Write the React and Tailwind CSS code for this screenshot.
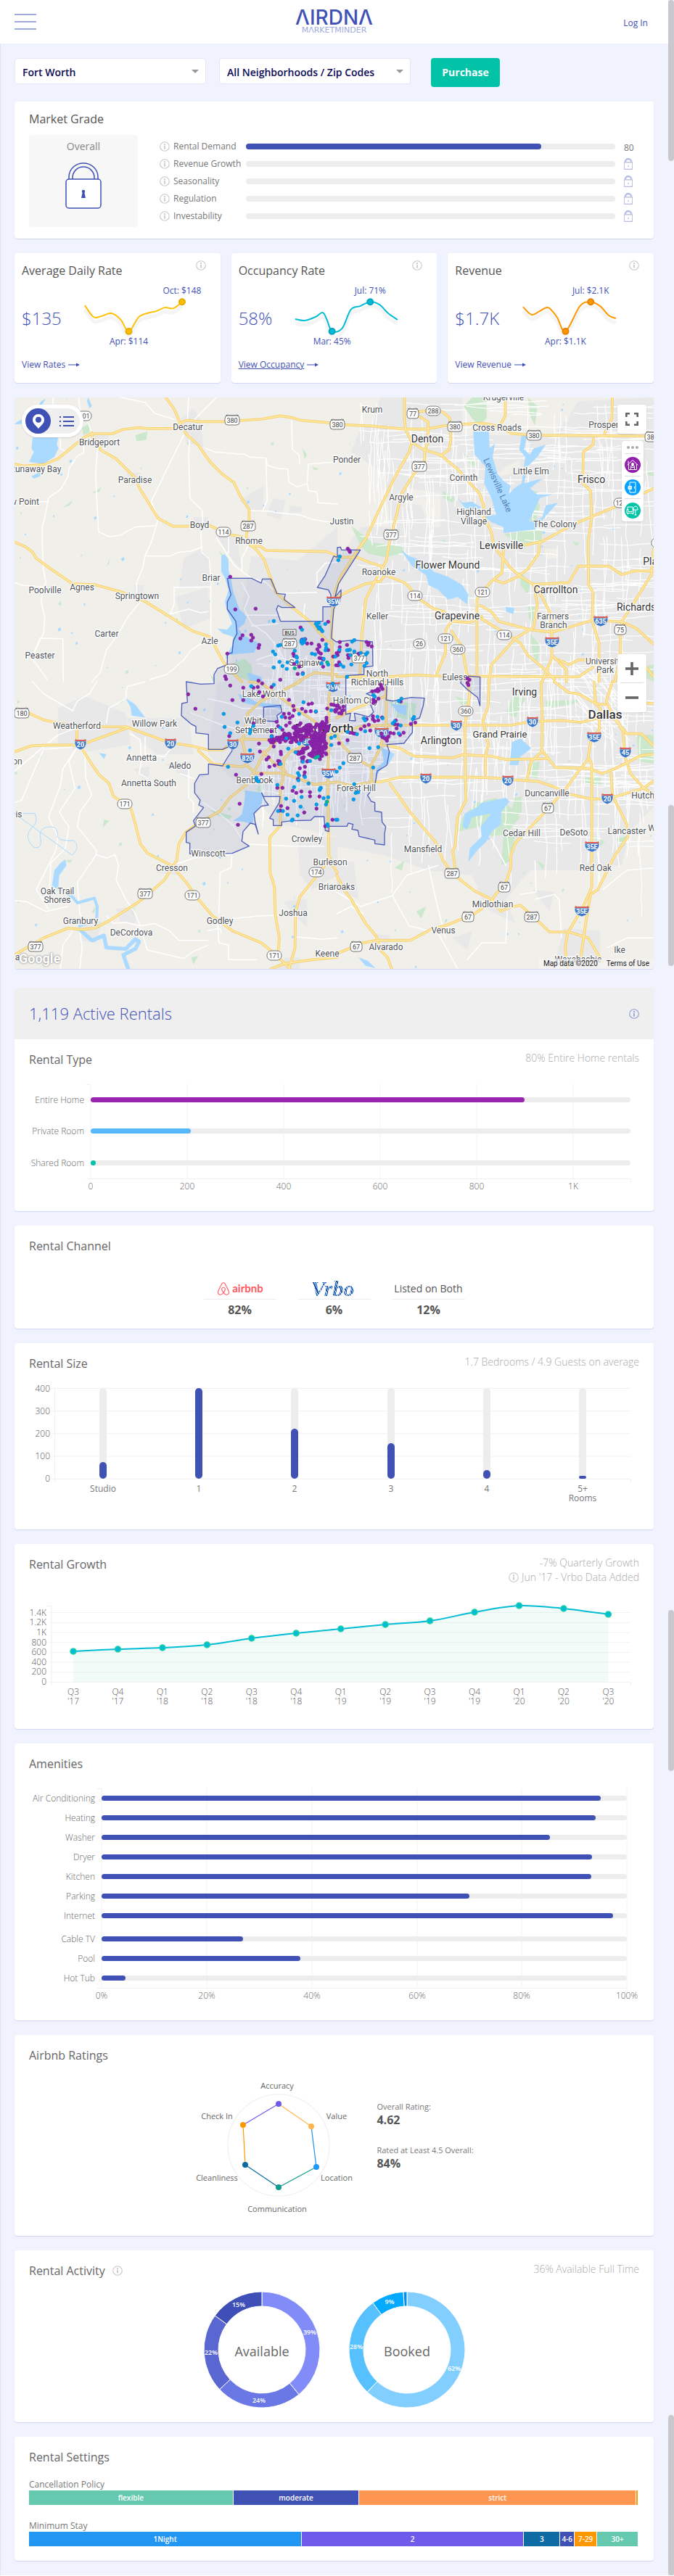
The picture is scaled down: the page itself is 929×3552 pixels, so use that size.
import React from "react";
import { FaAirbnb } from "react-icons/fa";

/* ---------- shared pieces ---------- */

function Info({ className = "text-[#c8c8c8]" }) {
  return (
    <svg className={"h-3.5 w-3.5 shrink-0 " + className} viewBox="0 0 14 14" fill="none" stroke="currentColor" aria-hidden="true">
      <circle cx="7" cy="7" r="6.3" strokeWidth="1.1" />
      <rect x="6.4" y="3.6" width="1.2" height="1.2" strokeWidth=".8" />
      <path d="M7 6.2v4.4" strokeWidth="1.8" />
    </svg>
  );
}

function Card({ children, className = "" }) {
  return <section className={"rounded bg-white shadow-[0_1px_1px_#cfd6f3] " + className}>{children}</section>;
}

function CardHead({ title, icon, children }) {
  return (
    <div className="flex items-start justify-between px-5 pt-4">
      <h2 className="flex items-center gap-2.5 text-base text-[#666]">
        {title}
        {icon}
      </h2>
      <div className="text-right text-sm font-light leading-5 text-[#aaa]">{children}</div>
    </div>
  );
}

function Lock({ className, stroke = 1.5 }) {
  return (
    <svg className={className} viewBox="0 0 50 64" fill="none" stroke="currentColor" strokeWidth={stroke} aria-hidden="true">
      <path d="M5 23v-3a20 19 0 0 1 40 0v3M10 23v-2a15 15 0 0 1 30 0v2" />
      <rect x="1" y="23" width="48" height="40" rx="4" fill="white" />
      <circle cx="25" cy="40" r="2.2" fill="currentColor" stroke="none" />
      <path d="M24 40h2l2 9h-6z" fill="currentColor" stroke="none" />
    </svg>
  );
}

function smooth(pts) {
  let d = `M${pts[0][0]} ${pts[0][1]}`;
  for (let i = 0; i < pts.length - 1; i++) {
    const p0 = pts[i - 1] || pts[i];
    const p1 = pts[i];
    const p2 = pts[i + 1];
    const p3 = pts[i + 2] || p2;
    d += `C${p1[0] + (p2[0] - p0[0]) / 6} ${p1[1] + (p2[1] - p0[1]) / 6} ${p2[0] - (p3[0] - p1[0]) / 6} ${p2[1] - (p3[1] - p1[1]) / 6} ${p2[0]} ${p2[1]}`;
  }
  return d;
}

/* ---------- header ---------- */

function Header() {
  return (
    <header className="flex h-15 items-center justify-between bg-white px-5">
      <button aria-label="Menu" className="flex w-[72px] flex-col gap-2">
        <span className="h-0.5 w-[30px] bg-[#a0abdc]" />
        <span className="h-0.5 w-[30px] bg-[#a0abdc]" />
        <span className="h-0.5 w-[30px] bg-[#a0abdc]" />
      </button>
      <a href="#home" aria-label="AIRDNA MARKETMINDER" className="flex flex-col items-center">
        <span className="font-[Inter,sans-serif] text-[28px] font-medium leading-6 text-[#3f51b5]">ΛIRDNΛ</span>
        <span className="font-['DejaVu_Sans',sans-serif] text-[11px] leading-3 text-[#a0abdc]">MΛRKETMINDER</span>
      </a>
      <div className="w-[72px] pr-2 text-right">
        <a href="#login" className="text-xs text-[#3f51b5]">Log In</a>
      </div>
    </header>
  );
}

function Picker({ label, value }) {
  return (
    <div className="relative w-[264px]">
      <select aria-label={label} className="h-9 w-full appearance-none rounded-sm border border-[#e3e6f3] bg-white pl-2.5 pr-6 pt-1 text-sm font-semibold text-[#0b0b56]">
        <option>{value}</option>
      </select>
      <span className="pointer-events-none absolute right-2.5 top-4 border-x-5 border-t-5 border-x-transparent border-t-[#999]" />
    </div>
  );
}

/* ---------- market grade ---------- */

const grades = ["Rental Demand", "Revenue Growth", "Seasonality", "Regulation", "Investability"];

function MarketGrade() {
  return (
    <Card className="mt-5 px-5 pb-4 pt-3">
      <h2 className="text-base text-[#555]">Market Grade</h2>
      <div className="mt-2.5 flex gap-[30px]">
        <div className="flex h-[127px] w-[150px] shrink-0 flex-col items-center rounded bg-[#f7f7f7] pt-1.5">
          <span className="text-sm text-[#888]">Overall</span>
          <Lock className="mt-3 h-16 w-[50px] text-[#3f51b5]" />
        </div>
        <div className="flex flex-1 flex-col pt-1">
          {grades.map((g, i) => (
            <div key={g} className="flex h-6 items-center">
              <Info />
              <span className="w-[105px] pl-[5px] text-xs text-[#777]">{g}</span>
              <div className="h-2 flex-1 rounded-full bg-[#ededed]">
                {i === 0 && <div className="h-2 w-4/5 rounded-full bg-[#3f51b5]" />}
              </div>
              <div className="w-[33px] pl-3">
                {i === 0 ? <span className="text-xs text-[#777]">80</span> : <Lock stroke={5} className="h-4 w-3 text-[#b2bae1]" />}
              </div>
            </div>
          ))}
        </div>
      </div>
    </Card>
  );
}

/* ---------- metric cards ---------- */

const metrics = [
  {
    title: "Average Daily Rate", value: "$135", link: "View Rates", color: "#ffc107", edge: "#e6aa00",
    pts: [[12, 32], [24, 48], [35, 47], [49, 43], [62, 52], [73, 68], [87, 48], [102, 42], [111, 40], [123, 35], [135, 36], [147, 27]],
    hi: [147, 27, "Oct: $148"], lo: [73, 68, "Apr: $114"],
  },
  {
    title: "Occupancy Rate", value: "58%", link: "View Occupancy", underline: true, color: "#00bcd4", edge: "#00a5bb",
    pts: [[3, 51], [16, 53], [31, 48], [41, 42], [47, 52], [54, 68], [68, 64], [80, 38], [93, 33], [107, 27], [120, 31], [132, 43], [145, 52]],
    hi: [107, 27, "Jul: 71%"], lo: [54, 68, "Mar: 45%"],
  },
  {
    title: "Revenue", value: "$1.7K", link: "View Revenue", color: "#ff9800", edge: "#e68200",
    pts: [[19, 34], [31, 45], [42, 40], [54, 35], [66, 48], [78, 68], [98, 33], [113, 27], [126, 33], [138, 46], [148, 50]],
    hi: [113, 27, "Jul: $2.1K"], lo: [78, 68, "Apr: $1.1K"],
  },
];

function Metric({ m }) {
  return (
    <Card className="px-2.5 pb-[15px] pt-2.5">
      <div className="flex justify-between pr-2.5">
        <h2 className="pt-0.5 text-base text-[#555]">{m.title}</h2>
        <Info />
      </div>
      <div className="mt-1 flex items-center">
        <span className="w-[75px] shrink-0 text-2xl font-light text-[#3f51b5]">{m.value}</span>
        <svg viewBox="0 0 190 100" className="h-[100px] w-full min-w-0 overflow-visible" preserveAspectRatio="xMinYMid meet">
          <path d={smooth(m.pts)} fill="none" stroke="#000" strokeOpacity=".04" strokeWidth="5" transform="translate(0 6)" />
          <path d={smooth(m.pts)} fill="none" stroke={m.color} strokeWidth="2" />
          {[m.hi, m.lo].map(([x, y, t], i) => (
            <g key={t}>
              <circle cx={x} cy={y} r="4" fill={m.color} stroke={m.edge} strokeWidth="2" />
              <text x={x} y={i ? 86 : 16} textAnchor="middle" fontSize="12" fill="#3f51b5">{t}</text>
            </g>
          ))}
        </svg>
      </div>
      <a href="#details" className="mt-1 flex items-center gap-1 text-xs leading-5 text-[#3f51b5]">
        <span className={m.underline ? "underline" : ""}>{m.link}</span>
        <svg viewBox="0 0 16 8" className="h-2 w-4"><path d="M0 3.5h11V1.400L16 4l-5 2.600V4.500H0z" fill="#3f51b5" /></svg>
      </a>
    </Card>
  );
}

/* ---------- map ---------- */

/* Each quadrant is drawn in thirds of a pixel with its own origin. */
const Q = { nw: [-60, -24], ne: [1332, -24], sw: [-60, 1176], se: [1332, 1176] };

const highways = {
  nw: [
    "60,300 100,308 180,302 240,278 300,228 350,188 380,174 465,174 510,156 575,149 610,153 720,152 750,128 775,118 820,124 920,124 1080,114 1160,100 1210,108 1240,118 1395,132",
    "685,24 720,72 745,130 770,175 820,222 870,292 920,342 967,376 990,425 1030,488 1030,530 1018,600 1045,640 1065,660 1092,695 1110,745 1140,830 1200,885 1280,950 1350,1030 1375,1045",
    "380,170 382,190 412,215 414,240 480,278 555,352 580,405 655,525 715,557 800,557 870,555 940,590 1000,600",
    "1035,637 1075,640 1100,657 1350,662 1395,680",
    "60,622 105,642 133,662 150,690 220,740 300,795 390,798 500,828 600,868 700,930 795,990 870,1015 900,1075 925,1120 960,1160 1000,1200",
    "1402,780 1385,830 1370,960 1375,1200",
    "1230,1200 1300,1163 1392,1170",
  ],
  ne: [
    "0,135 140,142 280,155 370,155 440,142 540,134 600,130 680,145 720,172 800,180 1000,182 1311,184",
    "0,685 85,685 140,708 185,722 205,760 280,790 300,808 330,850 400,898 445,910 475,950",
    "280,24 280,110 285,155 310,210 300,250 240,355 180,480 120,610 90,650 20,760 10,780",
    "310,210 360,240 430,262 500,320 545,372 590,420 608,470 610,520 640,580 650,640 720,730 760,765 810,795 850,850 880,910 890,1000 890,1100 850,1200",
    "320,90 378,125 378,210 365,240 363,290 320,340 270,420 250,500 215,640 205,700 155,790 120,860 105,1000 95,1200",
    "330,85 400,74 440,85 468,110 472,200 465,240 430,265",
    "0,850 60,820 120,795 180,785 200,760",
    "1062,195 1060,220 1020,250 1018,380 1050,410 1055,520 1040,620 1042,800 1060,830 1057,950 1085,1040 1085,1200",
    "1311,400 1270,420 1180,465 1060,515 1000,540 940,570 850,620 775,635",
    "840,620 835,670 790,735 740,770 690,792 650,778",
    "690,650 683,750 640,785 600,830 580,860 580,1165",
    "815,797 960,790 1000,722 1125,722 1180,757 1230,742 1311,742",
    "595,885 640,910 670,950 800,985 890,995 960,975 1060,945 1180,952 1240,980 1311,1045",
    "600,940 640,965 700,1000 760,1040 790,1090 850,1140 900,1190",
    "600,930 550,955 475,950 452,985 450,1080 415,1165",
    "475,990 520,1060 535,1150 545,1200",
    "1311,650 1300,760 1250,840 1180,950 1173,1010 1173,1100 1150,1200",
    "815,797 830,880 815,975 740,1020 640,1130 630,1200",
    "0,1180 240,1178 330,1172 400,1176 1000,1180 1060,1140",
    "890,1090 950,1150 950,1200",
    "920,1110 960,1130 1000,1110 1080,1108",
    "1140,24 1138,110 1105,180",
    "698,24 697,100 675,140",
    "1280,1140 1311,1180",
  ],
  sw: [
    "60,290 130,265 200,262 310,262 360,252 530,190 600,215 700,252 790,265 860,282 920,282 960,255 1005,237 1120,240 1250,232 1395,215",
    "120,130 180,158 260,175 420,186 530,187", "318,190 318,262",
    "820,285 880,340 1000,352 1020,345 1055,378 1170,378 1230,400 1300,425 1395,415",
    "1000,237 1010,280 1020,345", "1005,237 1025,130 1080,80 1150,45 1240,0",
    "335,270 375,335 410,385 450,420 470,475 540,520 560,590 580,670 610,710 710,760 770,830 820,900 880,970 960,1030 1080,1080 1130,1120 1200,1188",
    "60,1130 180,1060 280,1020 340,1025 390,1020 450,990 560,920 600,890 680,820 730,740 740,670 770,620 830,580 910,535 950,480 1020,425 1050,375 1090,300 1160,230",
    "1160,595 1160,440 1170,400 1175,320 1200,290 1290,250", "1160,595 1115,645 1117,790 1135,850 1138,960 1155,1060 1150,1120",
    "1365,730 1320,790 1240,890 1222,950 1220,1100 1195,1188", "1120,1188 1180,1165 1290,1150 1395,1140",
    "1030,0 1080,5 1220,110 1310,170", "1090,290 1130,335 1180,370", "1375,0 1360,60 1360,240 1355,400 1360,720 1365,745 1395,790",
  ],
  se: [
    "0,215 100,185 200,180 350,180 720,180 800,165 930,160 1010,168 1085,150",
    "545,0 550,60 530,180 532,400 535,490 500,560 490,680 480,700 490,770",
    "0,220 20,260 70,310 140,352", "178,265 200,262 260,275 320,308 480,315 520,302 640,308 700,322 870,318",
    "205,0 205,180 178,280 145,340 145,415", "0,415 60,430 145,415 180,415 260,395 400,395 550,395 650,398 720,405 830,412 900,435 950,462 1050,485 1120,485 1270,440 1311,410",
    "220,420 300,535 410,665 440,740 480,795 570,865 640,900 680,950 710,935 760,925 800,960 880,1035 960,1035 1040,1060 1100,1160",
    "1040,320 1000,370 950,440 870,530 740,665 720,720 720,770 700,830 650,890 640,910 570,960 460,1005 390,1025 305,1070 165,1070 110,1080 0,1125",
    "630,0 627,100 605,160 627,260 615,310 615,385", "845,0 850,150 848,290 805,330 785,410",
    "850,285 905,355 1040,358 1100,380 1150,360 1260,305 1311,300",
    "1090,190 1050,250 1040,310 1055,340 1055,850 1020,930 955,1040 945,1100 955,1188",
    "1135,380 1140,470 1200,590 1205,640 1150,720 1080,860 1050,880 1025,1030 1010,1140",
    "1155,150 1185,210 1190,300 1215,380 1270,440 1311,465", "1150,155 1200,215 1260,215 1311,265",
    "1065,0 1070,90 1090,110 1085,190", "1140,0 1115,80 1150,155", "900,0 960,45 1000,50 1070,90 1110,95",
    "0,150 80,110 200,60", "1200,85 1311,90", "0,800 30,860 60,900 120,1000 165,1055 180,1110 210,1140 228,1188",
  ],
};

const roads = {
  nw: [
    "500,24 600,45 640,90 720,115", "895,24 800,120", "780,24 775,118", "220,24 218,80", "250,190 250,235 275,250", "325,24 330,70 365,130 380,170",
    "350,190 345,255 320,265 285,320 280,355 250,405 200,440 190,500 175,560 175,640 180,740 190,790 175,820 170,870 185,930 180,1000 130,1100 195,1190",
    "60,455 200,455", "405,220 395,340 400,440 408,580 450,600 495,595 560,560 640,555",
    "760,180 715,270 625,455 655,520 645,560 625,625 600,680 590,730 565,790 565,830 580,870 530,930 490,1000 440,1070 415,1160 380,1200",
    "785,180 780,260 785,440 835,490 840,545 830,590 835,665 865,690 872,780 872,1010", "850,235 890,250 1015,260 1030,270 1100,275 1105,305 1150,318 1190,320 1195,375 1230,395 1270,380 1275,300 1395,290",
    "1100,280 1105,450 1085,495", "1030,492 1120,495 1140,500 1240,510 1290,528 1330,535 1395,545", "1270,380 1275,410 1310,415 1315,460 1395,465", "1205,120 1210,240 1235,260 1240,300",
    "600,680 705,680 735,665 790,660 830,645", "60,790 90,800 180,808", "165,1020 260,1022 262,1200", "165,1020 130,1110", "720,810 870,808", "720,810 720,880 705,920 780,900 830,915 860,910", "870,1015 790,1070 760,1110 690,1170 620,1190",
    "1025,640 1000,690 1000,740", "895,605 970,720 1040,772 1100,790 1140,830", "945,600 945,670", "1000,790 1030,850 1010,900 1040,960 1100,1000 1150,1060 1180,1120", "1040,970 1150,960", "1150,835 1310,830", "1260,880 1255,940", "1395,705 1345,710 1310,750 1312,800", "1060,1110 1120,1090 1190,1110 1260,1150", "980,925 1160,925",
  ],
  sw: [
    "135,0 180,50 300,120", "300,120 320,80 370,50 400,0", "440,170 450,110 520,70 525,20 600,0", "320,190 240,220 60,370", "320,270 260,360 250,430 200,560 240,640 230,700 150,860 200,940", "300,270 180,280 140,370 90,490 60,500",
    "350,280 355,400 380,470 330,540 320,600 400,700 395,720 320,830 325,900 330,960 360,1000", "320,270 285,330 310,440 245,540 285,600 270,690 210,750 205,850 230,870", "395,715 440,730 475,715 490,760 480,820 520,900 560,960 580,1010 520,995 470,1000 440,970",
    "580,1010 640,1000 700,1030 740,1070 860,1070", "540,215 580,240 585,330 575,380 610,400", "600,230 600,300 680,310 720,260", "745,380 800,400", "780,340 780,480 800,500 800,540", "960,720 955,770 910,790 905,960", "960,980 1060,970 1150,965", "900,1000 905,1080 945,1090 945,1150 1060,1150",
    "860,1030 910,1020 915,1040", "580,1020 610,1110 760,1145 800,1115 860,1090", "1030,672 1200,680 1340,680", "715,760 800,730 960,715", "60,905 110,910 190,950 280,930", "300,1030 260,1090 250,1188", "330,1030 340,1100 330,1188",
    "1220,1055 1330,1065 1395,1060", "840,500 900,540 960,590 1000,650", "790,130 870,160 920,180 1000,200", "860,70 950,90 1000,110 1150,110",
  ],
  ne: [],
  se: ["0,870 100,930 230,885 300,1010 420,1040 500,1188", "230,885 290,800 420,760", "380,760 410,900 450,1060", "0,960 60,930 110,960", "540,1150 600,1080 700,1080 705,950", "820,900 900,880 920,900 930,1060", "1100,860 1200,780 1311,770", "1120,1100 1200,1060 1311,1060", "700,760 640,650", "820,740 825,870 760,880"],
};

const lakes = {
  nw: [
    "135,190 240,190 235,220 242,235 225,270 200,285 180,300 145,295 120,290 140,250 130,235",
    "915,680 930,672 945,700 945,740 955,770 965,830 990,900 1020,930 1010,960 985,980 1010,1010 1070,1040 1050,1080 975,1085 960,1090 940,1085 960,1050 965,1015 920,1000 900,980 940,985 960,960 940,910 930,870 945,820 930,770 915,745",
    "365,24 380,60 370,70 360,40", "130,350 170,330 165,350 140,360", "170,40 190,30 180,45 150,90 85,135 60,135 70,125 140,90", "1020,1160 1080,1180 1085,1200 1035,1200",
  ],
  ne: [
    "565,165 630,165 632,235 655,215 645,270 665,340 690,370 720,390 710,425 735,400 765,380 780,270 755,240 765,180 790,170 775,240 800,260 815,235 865,220 830,270 790,310 775,380 810,370 850,360 800,400 830,425 890,425 840,440 795,540 850,520 865,470 915,460 860,520 820,570 690,585 690,560 640,540 610,515 660,510 640,440 610,380 615,310 570,260",
    "265,655 300,680 330,690 380,720 400,745 460,765 520,800 545,840 540,880 500,850 460,860 420,820 380,800 370,760 310,720 290,690", "500,440 520,460 560,455 600,480 560,490 530,480", "700,890 735,895 730,920 700,910",
  ],
  sw: [
    "1015,450 1085,460 1085,500 1050,545 1045,590 1010,580 965,575 1000,550 1010,500", "985,50 1020,60 1060,85 1110,90 1165,95 1160,110 1090,105 1040,95 1000,85",
    "520,68 560,95 600,148 545,140 540,105", "270,735 275,760 245,800 240,860 215,845 225,780 250,750", "410,295 440,300 430,320",
  ],
  se: [
    "520,600 530,545 580,520 600,500 700,480 715,495 680,540 680,590 640,620 620,660 580,700 545,745 550,690 600,640 595,600 640,545 560,560 540,610",
    "725,250 760,235 805,275 760,310 750,345 715,345 720,300", "185,270 240,300 215,340 190,350 160,395 165,360 195,330", "225,90 290,100 285,140 250,125", "90,1140 130,1155 160,1185 120,1175",
  ],
};

const parks = {
  nw: ["560,180 610,165 605,200 565,205", "340,150 370,130 370,170 345,180", "1250,235 1270,260 1260,280", "260,480 300,450 290,470", "870,1170 890,1190 880,1200", "950,1130 1010,1105 1040,1130 1045,1200 980,1180", "1290,310 1320,320 1300,325", "380,420 420,395 410,415", "905,660 945,690 940,720", "440,720 455,690 450,715", "240,880 250,865 255,885", "985,910 1010,930 1005,960 990,940"],
  ne: ["525,60 560,24 620,24 620,110 590,140 560,110", "690,590 850,565 848,620 780,625 720,610", "60,555 150,625 270,640 280,670 200,685 130,670 100,640", "440,410 490,440 480,460 440,440", "760,740 800,800 790,840 760,800", "790,24 830,60 820,140 800,100", "760,420 830,410 820,440 790,440", "520,250 580,300 560,310", "975,620 1005,625 990,640", "790,885 820,890 810,960 795,940", "800,1000 840,1050 830,1130 810,1080", "790,460 820,440 840,470 820,560 795,540", "1290,330 1311,335 1311,350 1285,345", "1290,1130 1311,1130 1311,1200 1270,1180"],
  sw: ["430,570 450,575 425,605", "870,530 960,555 950,570 890,550", "1070,430 1100,420 1090,460 1060,450", "1240,130 1270,120 1280,160", "270,740 300,735 290,750", "790,1140 820,1135 800,1170", "1010,450 1035,460 1020,500", "380,950 395,930 390,960", "540,930 555,940 550,965"],
  se: ["580,500 660,480 720,520 760,560 700,630 640,640 590,600 500,620 520,560", "735,480 765,475 765,540 740,560 725,530", "1240,220 1311,220 1311,340 1250,330", "730,60 780,70 740,150 700,130", "790,340 840,330 830,400 790,390", "690,640 740,620 720,740 680,760", "860,80 1000,75 990,90 870,110", "1150,650 1200,640 1190,680", "220,80 330,90 320,160 240,150", "240,770 280,740 270,780", "830,740 860,760 850,780", "1010,400 1090,390 1100,430 1050,430", "1060,640 1110,660 1090,680", "330,950 370,930 350,980", "490,60 560,80 520,100"],
};

const urban = {
  nw: ["760,690 830,650 870,690 870,810 740,810", "990,450 1090,390 1090,500 1030,490", "725,850 860,810 870,940 760,980", "1130,440 1180,450 1160,530 1100,510", "750,110 800,70 830,120 840,230 770,210", "800,520 860,520 860,570 800,570", "1040,680 1230,700 1395,560 1395,1200 940,1200 1000,900", "385,180 450,180 440,230 390,230", "555,800 595,800 590,850 560,850", "1200,470 1250,480 1245,500 1195,500", "900,600 980,600 1000,740 950,680", "525,335 585,335 580,375 530,375"],
  ne: ["180,24 520,24 520,180 900,180 1000,40 1311,24 1311,1200 0,1200 0,700 100,560 220,560 200,340 60,250 100,140 150,140"],
  sw: ["900,0 1395,0 1395,640 1160,590 1000,440 860,300", "240,110 350,60 520,130 540,260 360,290 240,260", "520,150 780,150 800,300 650,300 560,230", "680,340 790,330 770,400", "640,790 740,750 740,800", "320,1010 420,990 400,1080 340,1070", "480,940 560,930 560,1000 500,1000", "1230,640 1395,640 1395,800 1290,860 1240,800", "1170,910 1270,900 1270,1020", "550,360 620,350 610,420", "1180,1140 1240,1140 1240,1188 1140,1188"],
  se: ["0,0 1311,0 1311,520 1210,620 1180,760 1000,780 800,780 700,900 740,1000 620,940 560,800 380,780 200,720 0,680", "0,760 70,740 90,900 0,860", "810,860 900,870 880,950", "480,1060 560,1030 540,1110", "940,1020 1090,1030 1090,1188 900,1170", "140,1040 220,1050 210,1100"],
};

const pale = {
  ne: ["640,360 760,330 760,280 700,310", "60,24 170,30 90,110 0,150 0,24", "290,400 430,420 430,560 380,560 350,470 280,460", "860,650 915,650 915,690 865,690", "890,24 980,24 960,120 880,140", "630,24 780,24 780,60 640,130"],
};

const city =
  "940,772 1040,772 1080,792 1085,775 1120,775 1145,835 1180,838 1175,860 1220,893 1165,893 1150,885 1143,900 1160,950 1335,950 1335,890 1368,890 1368,840 1358,820 1312,810 1345,760 1380,680 1395,685 1395,645 1408,643 1412,655 1490,655 1400,795 1385,850 1410,820 1410,850 1395,870 1380,900 1370,1020 1390,1035 1460,1028 1540,1035 1542,1135 1505,1140 1505,1170 1430,1175 1430,1335 1450,1330 1445,1360 1470,1362 1465,1330 1525,1345 1545,1325 1530,1290 1550,1265 1515,1250 1560,1230 1600,1210 1597,1275 1625,1280 1700,1265 1755,1268 1750,1300 1735,1350 1705,1360 1705,1410 1670,1455 1600,1460 1610,1490 1600,1545 1560,1570 1550,1630 1520,1670 1535,1695 1550,1700 1550,1735 1578,1740 1580,1780 1595,1800 1590,1830 1590,1875 1550,1870 1550,1855 1485,1840 1480,1815 1455,1810 1460,1790 1440,1785 1435,1798 1360,1798 1360,1820 1345,1815 1340,1758 1300,1758 1285,1773 1210,1775 1165,1780 1165,1795 1130,1795 1130,1770 1115,1765 1155,1700 1158,1675 1090,1675 1082,1660 1095,1690 1110,1710 1080,1715 1050,1745 1055,1780 1068,1830 1055,1790 1035,1785 1005,1820 1000,1860 1030,1880 960,1910 785,1912 785,1868 770,1865 770,1822 808,1797 800,1775 842,1720 822,1710 828,1690 805,1660 805,1620 825,1585 862,1582 862,1540 920,1548 940,1515 960,1485 955,1465 920,1480 862,1480 862,1418 810,1412 810,1385 790,1375 750,1340 752,1290 775,1285 770,1200 830,1210 885,1208 885,1170 900,1145 940,1130 940,1085 960,1080 965,1030 980,1000 975,950 940,900 940,870 955,840 945,800";

const places = {
  nw: [[410, 208, "Bridgeport"], [778, 145, "Decatur"], [148, 319, "Runaway Bay"], [558, 364, "Paradise"], [103, 456, "w Point"], [826, 550, "Boyd"], [1028, 616, "Rhome"], [874, 769, "Briar"], [185, 822, "Poolville"], [338, 810, "Agnes"], [567, 844, "Springtown"], [442, 1000, "Carter"], [868, 1030, "Azle"], [166, 1090, "Peaster"], [1262, 1120, "Saginaw"]],
  ne: [[148, 73, "Krum"], [690, 24, "Krugerville"], [662, 150, "Cross Roads"], [1103, 138, "Prosper"], [376, 196, "Denton", 14], [42, 280, "Ponder"], [803, 330, "Little Elm"], [1054, 364, "Frisco", 14], [525, 355, "Corinth"], [268, 438, "Argyle"], [566, 498, "Highland"], [568, 535, "Village"], [22, 535, "Justin"], [902, 547, "The Colony"], [682, 635, "Lewisville", 14], [174, 745, "Roanoke"], [458, 718, "Flower Mound", 14], [907, 820, "Carrollton", 14], [168, 928, "Keller"], [498, 928, "Grapevine", 14], [894, 928, "Farmers"], [896, 964, "Branch"], [1262, 890, "Richardson", 14], [1320, 703, "Plano", 14], [1108, 1114, "University"], [1110, 1150, "Park"], [168, 1167, "North"], [168, 1203, "Richland Hills"], [488, 1180, "Euless"]],
  sw: [[318, 181, "Weatherford"], [640, 172, "Willow Park"], [1092, 51, "Lake Worth"], [1057, 162, "White"], [1058, 199, "Settlement"], [1342, 192, "Fort Worth", 17], [584, 313, "Annetta"], [745, 346, "Aledo"], [616, 418, "Annetta South"], [1053, 406, "Benbrook"], [72, 328, "on"], [77, 547, "is"], [1269, 649, "Crowley"], [860, 709, "Winscott"], [710, 769, "Cresson"], [1364, 745, "Burleson"], [1391, 847, "Briaroaks"], [238, 865, "Oak Trail"], [238, 901, "Shores"], [1212, 955, "Joshua"], [333, 988, "Granbury"], [910, 988, "Godley"], [543, 1036, "DeCordova"], [1354, 1123, "Keene"], [72, 1140, "a"]],
  se: [[778, 42, "Irving", 14], [78, 76, "Haltom City"], [1110, 136, "Dallas", 17], [432, 244, "Arlington", 14], [674, 217, "Grand Prairie", 13], [869, 460, "Duncanville"], [80, 439, "Forest Hill"], [1290, 469, "Hutchins"], [764, 625, "Cedar Hill"], [982, 622, "DeSoto"], [1200, 616, "Lancaster"], [1345, 604, "Wilmer"], [358, 691, "Mansfield"], [1071, 769, "Red Oak"], [645, 919, "Midlothian"], [442, 1027, "Venus"], [205, 1096, "Alvarado"], [1169, 1108, "Ike"], [1000, 1147, "Waxahachie"]],
};

/* o = state oval, u = US shield, i = interstate */
const shields = {
  nw: [[348, 99, "101", "o"], [961, 116, "380", "u"], [1394, 134, "380", "u"], [925, 579, "114", "o"], [1027, 554, "287", "u"], [1380, 868, "35W", "i"], [1198, 1040, "287", "u"], [958, 1146, "199", "o"]],
  ne: [[316, 89, "77", "u"], [400, 78, "288", "o"], [490, 143, "380", "u"], [817, 179, "380", "u"], [1306, 187, "380", "u"], [343, 309, "377", "u"], [1176, 460, "121", "o"], [226, 590, "377", "u"], [1325, 625, "75", "o"], [325, 843, "114", "o"], [604, 828, "121", "o"], [1091, 949, "635", "i"], [1173, 983, "75", "u"], [694, 1005, "114", "o"], [451, 1020, "121", "o"], [891, 1036, "35E", "i"], [342, 1041, "26", "o"], [501, 1065, "360", "o"], [94, 1101, "377", "u"]],
  sw: [[91, 128, "180", "u"], [334, 259, "20", "i"], [706, 255, "20", "i"], [964, 259, "30", "i"], [1022, 315, "820", "i"], [1376, 22, "35W", "i"], [1268, 246, "30", "i"], [1360, 379, "35W", "i"], [517, 503, "171", "o"], [839, 583, "377", "u"], [1309, 786, "174", "o"], [601, 875, "377", "u"], [796, 881, "171", "o"], [148, 1094, "377", "u"], [1135, 1131, "171", "o"]],
  se: [[535, 120, "360", "o"], [496, 181, "30", "i"], [809, 166, "30", "i"], [186, 211, "820", "i"], [1064, 227, "35E", "i"], [1195, 290, "45", "i"], [74, 314, "287", "u"], [368, 400, "20", "i"], [709, 409, "20", "i"], [1120, 482, "20", "i"], [874, 521, "67", "u"], [1055, 680, "35E", "i"], [478, 791, "287", "u"], [694, 848, "67", "u"], [1013, 949, "35E", "i"], [544, 973, "67", "u"], [807, 971, "287", "u"], [82, 1096, "67", "u"]],
};

const homes = {
  nw: "952,766 973,901 1057,898 994,1021 1003,1008 1039,1006 1046,1018 1039,1030 1072,1048 1069,1060 940,1084 931,1178 935,1189 1069,1196 1159,1192 1243,976 1249,1026 1262,1024 1270,1042 1288,1042 1333,1027 1357,952 1318,1048 1312,1066 1318,1078 1327,1084 1213,1084 1216,1093 1321,1102 1330,1104 1216,1126 1237,1138 1231,1168 1252,1165 1336,1138 1378,1096 1390,1132 1357,1069 1321,1055 1337,1108",
  ne: "46,650 55,663 52,657 13,1036 43,1048 124,1036 130,1048 145,1054 13,1057 10,1075 4,1090 91,1084 47,1090 49,1102 10,1120 7,1132 541,1186 549,1192 0,1082 133,1040",
  sw: "778,52 952,16 808,112 961,76 1006,25 1006,76 1048,25 1066,22 1084,7 1087,61 1123,22 1072,43 1048,172 948,225 1071,256 1075,289 1111,313 1102,322 1114,352 1135,346 1150,328 1153,340 1156,330 976,385 1081,382 991,505 984,592 1147,439 1168,439 1162,514 1189,523 1159,533 1210,451 1225,460 1246,454 1282,457 1282,474 1321,475 1258,541 1309,525 1345,598 1375,571 1240,358 1260,375 1261,352 1232,402 1258,389 1195,75 1213,100 1216,118 1249,112 1264,123 1276,93 1290,90 1285,122 1306,124 1353,111 1370,94 1380,96 1387,124 1174,133 1180,148 1195,132 1210,142 1198,150 1144,166 1150,184 1183,181 1198,170 1122,205 1144,232 1168,199 1132,268 1161,290 1162,300 1120,250 1135,245 1250,330 1248,315 1270,330 1385,118 1391,100",
  se: "182,12 170,30 160,38 147,40 190,30 185,22 175,36 152,75 160,82 173,70 152,88 265,82 124,155 150,143 150,155 157,163 172,160 188,148 115,184 133,178 139,202 100,196 55,211 67,213 75,215 45,242 10,255 190,230 200,235 208,244 215,226 222,212 236,214 262,220 277,211 307,175 325,169 245,160 240,176 253,178 248,193 0,115 12,108 28,103 22,120 10,130 28,118 186,215 541,5 545,14 5,98 170,40 210,232 20,132",
};
const rooms = {
  nw: "1132,949 1249,985 1306,960 1318,956 1312,970 1322,975 1345,961 1333,991 1318,980 1328,984 1150,1051 1159,1048 1129,1075 1138,1087 1156,1118 1132,1141 1168,1135 1186,1147 1189,1120 1219,1072 1225,1096 1228,1118 1252,1168 1258,1024 1246,1036 1250,1042 1290,1084 1303,1087 1348,1046 1346,1070 1330,1124 1357,1129 1387,1096 1349,1060 1338,1105 1246,1030 1228,1100 1258,1036",
  ne: "13,682 7,697 64,1034 73,1028 49,1069 73,1075 43,1070 57,1090 100,1081 121,1087 127,1080 61,1129 115,1135 124,1123 16,1129 28,1138 43,1180 12,1068 55,1068",
  sw: "1039,19 1132,13 925,133 982,169 929,187 952,213 1048,183 1036,199 1033,213 1034,284 943,352 1060,398 1062,408 1070,412 1147,427 1165,145 1159,190 1255,85 1237,133 1123,226 1184,234 1237,256 1192,277 1222,292 1160,340 1252,331 1282,328 1306,123 1370,232 1385,225 1370,262 1216,436 1276,421 1232,378 1237,388 1261,394 1234,408 1327,439 1322,448 1183,484 1216,493 1247,477 1243,517 1231,553 1189,550 1210,570 1207,574 1150,535 1170,535 1309,508 1338,482 1357,478 1348,508 1354,590 1355,596 1390,571 1370,118 1376,8 1324,442",
  se: "152,55 158,62 112,151 118,160 169,145 190,151 118,205 45,208 84,217 268,70 257,80 240,164 232,172 265,181 257,214 315,154 320,146 136,275 172,271 28,337 13,356 151,355 0,372 73,424 79,460 89,457 70,487 3,571",
};

function rng(seed) {
  let s = seed;
  return () => {
    s = (s * 16807) % 2147483647;
    return s / 2147483647;
  };
}

function cluster(seed, cx, cy, rx, ry, n) {
  const r = rng(seed);
  return Array.from({ length: n }, () => {
    const a = r() * Math.PI * 2;
    const k = Math.sqrt(r());
    return [Math.round(cx + Math.cos(a) * rx * k), Math.round(cy + Math.sin(a) * ry * k)];
  });
}

const downtown = [
  ...cluster(11, 1250, 200, 40, 32, 50), ...cluster(23, 1210, 230, 50, 22, 45), ...cluster(31, 1315, 255, 36, 45, 70), ...cluster(47, 1265, 300, 35, 30, 24),
  ...cluster(53, 1340, 185, 18, 45, 26), ...cluster(61, 1160, 238, 50, 22, 18), ...cluster(71, 1300, 195, 40, 25, 16), ...cluster(83, 1320, 300, 30, 24, 20),
];

function streets() {
  const r = rng(97);
  const out = [];
  const walk = (x, y, dx, dy, steps) => {
    let d = `M${x} ${y}`;
    for (let i = 0; i < steps; i++) {
      x += dx * (28 + r() * 26) + (r() - 0.5) * (dy ? 12 : 0);
      y += dy * (28 + r() * 26) + (r() - 0.5) * (dx ? 12 : 0);
      d += `L${Math.round(x)} ${Math.round(y)}`;
    }
    out.push(d);
  };
  for (let i = 0; i < 210; i++) walk(1420 + r() * 1200, 20 + r() * 1850, 1, 0, 3 + Math.floor(r() * 9));
  for (let i = 0; i < 230; i++) walk(1420 + r() * 1200, 20 + r() * 1800, 0, 1, 3 + Math.floor(r() * 8));
  for (let i = 0; i < 70; i++) walk(1000 + r() * 400, 1080 + r() * 560, 1, 0, 2 + Math.floor(r() * 5));
  for (let i = 0; i < 70; i++) walk(1000 + r() * 400, 1000 + r() * 560, 0, 1, 2 + Math.floor(r() * 5));
  for (let i = 0; i < 30; i++) walk(2300 + r() * 180, 1100 + r() * 260, 0.7, 0.8, 3);
  return out.join("");
}
const streetPath = streets();

const ponds = (() => {
  const r = rng(5);
  return Array.from({ length: 190 }, (_, i) => {
    const x = Math.round(r() * 2640);
    const y = Math.round(r() * 2360);
    const s = 3 + r() * 8;
    return { green: i % 3 === 0, d: `M${x} ${y}l${s} ${-s * 0.5}l${s * 0.3} ${s}l${-s} ${s * 0.6}z` };
  });
})();

function quad(name, render) {
  return (
    <g key={name} transform={`translate(${Q[name][0]} ${Q[name][1]})`}>
      {render}
    </g>
  );
}
const names = ["nw", "ne", "sw", "se"];
const polys = (set, props) => names.map((n) => quad(n, (set[n] || []).map((p, i) => <polygon key={i} points={p} {...props} />)));
const lines = (set, props) => names.map((n) => quad(n, set[n].map((p, i) => <polyline key={i} points={p} {...props} />)));
const dots = (set, props) =>
  names.map((n) =>
    quad(n, (set[n] || "").split(" ").filter(Boolean).map((p, i) => {
      const [x, y] = p.split(",");
      return <circle key={i} cx={x} cy={y} r="7" {...props} />;
    })),
  );

function Shield({ x, y, label, kind }) {
  const w = label.length > 2 ? 20 : 16;
  if (kind === "i")
    return (
      <g>
        <path d={`M${x - w / 2} ${y - 4}h${w}q1 9 ${-w / 2} 12q${-w / 2 - 1} -3 ${-w / 2} -12z`} fill="#3b78c9" stroke="#fff" strokeWidth=".6" />
        <path d={`M${x - w / 2 + 1} ${y - 7}l2 1h${w - 6}l2 -1l1 3h${-w}z`} fill="#d9605a" />
        <text x={x} y={y + 4} textAnchor="middle" fontSize="9" fontWeight="700" fill="#fff">{label}</text>
      </g>
    );
  return (
    <g>
      <rect x={x - w / 2} y={y - 6} width={w} height="13" rx={kind === "o" ? 6 : 4} fill="#fff" stroke="#777" strokeWidth="1" />
      {kind === "u" && <path d={`M${x - w / 2 + 1} ${y - 6}l3 -1l3 1h${w - 14}l3 -1l3 1`} fill="#fff" stroke="#777" strokeWidth="1" />}
      <text x={x} y={y + 4} textAnchor="middle" fontSize="9" fill="#444">{label}</text>
    </g>
  );
}

function MapArt() {
  return (
    <svg viewBox="0 0 881 788" preserveAspectRatio="xMidYMid slice" className="block h-full w-full font-[Roboto,sans-serif]">
      <rect width="881" height="788" fill="#f0efea" />
      <g transform="scale(.33333)" fill="none" strokeLinejoin="round" strokeLinecap="round">
        {polys(urban, { fill: "#e8e8e8" })}
        {polys(pale, { fill: "#f0efea" })}
        {ponds.map((p, i) => <path key={i} d={p.d} fill={p.green ? "#cbe8cc" : "#aadaff"} />)}
        {polys(parks, { fill: "#cbe8cc" })}
        <path d={streetPath} stroke="#fff" strokeWidth="3.5" />
        {lines(roads, { stroke: "#fff", strokeWidth: 4.5 })}
        {polys(lakes, { fill: "#aadaff" })}
        {quad("sw", <g stroke="#aadaff">
          <polyline strokeWidth="12" points="235,850 300,890 320,915 390,895 402,930 400,980 330,1010" />
          <polyline strokeWidth="16" points="335,1030 380,1070 430,1050 440,1100 520,1105 560,1065 575,1075 560,1105 510,1130 530,1188" />
          <path strokeWidth="3" d="M60 545h85q15 40-15 60q-35 40 10 80q40 10 25-50q0-35 45-35q30 0 30 45q10 15 65 12q30 25-5 60z" />
        </g>)}
        {lines(highways, { stroke: "#f7d06f", strokeWidth: 11 })}
        {lines(highways, { stroke: "#ffe9a3", strokeWidth: 5 })}
        <g fill="#3f51b5" fillOpacity=".1" stroke="#3f51b5" strokeWidth="4" strokeOpacity=".9">
          {quad("nw", <g>
            <polygon points={city} />
            <polygon points="1910,1175 1985,1180 1985,1300 1975,1265 1930,1230 1905,1205" />
            <polygon points="1090,1305 1160,1298 1165,1325 1145,1340 1150,1365 1090,1362" />
          </g>)}
        </g>
      </g>
      <g fill="#505357" stroke="#fff" strokeWidth="2.5" strokeLinejoin="round" paintOrder="stroke" textAnchor="middle">
        {names.map((n) => places[n].map(([x, y, t, s]) => {
          const size = s || 12;
          return (
            <text key={n + t + x} x={Math.round((x + Q[n][0]) / 3)} y={Math.round((y + Q[n][1]) / 3 + size * 0.35)} fontSize={size} fontWeight={size > 15 ? 500 : 400} fill={size > 12 ? "#333" : "#505357"}>{t}</text>
          );
        }))}
        <text fontSize="12" transform="translate(666 121) rotate(66)" fill="#5383b8" stroke="none" y="4">Lewisville Lake</text>
      </g>
      {names.map((n) => shields[n].map(([x, y, t, k], i) => (
        <Shield key={n + i} x={Math.round((x + Q[n][0]) / 3)} y={Math.round((y + Q[n][1]) / 3)} label={t} kind={k} />
      )))}
      <g>
        <rect x="370" y="320" width="18" height="8" fill="#fff" stroke="#666" />
        <text x="379" y="327" textAnchor="middle" fontSize="7" fontWeight="700" fill="#444">BUS</text>
      </g>
      <g transform="scale(.33333)">
        {dots(homes, { fill: "#8e24aa", stroke: "#7b1fa2", strokeWidth: 2 })}
        {quad("sw", downtown.map(([x, y], i) => <circle key={i} cx={x} cy={y} r="7" fill="#8e24aa" stroke="#7b1fa2" strokeWidth="2" />))}
        {dots(rooms, { fill: "#03a0f0", stroke: "#0288d1", strokeWidth: 2 })}
        {dots({ nw: "1219,1144 1353,1120", sw: "1305,315 1315,310 1352,496" }, { fill: "#00b89c", stroke: "#009688", strokeWidth: 2 })}
      </g>
    </svg>
  );
}

function RentalMap() {
  return (
    <section aria-label="Map of rentals" className="relative mt-5 h-[788px] overflow-hidden rounded shadow-[0_1px_1px_#cfd6f3]">
      <MapArt />
      <div className="absolute left-2.5 top-2.5 flex h-[45px] w-[85px] items-center justify-between rounded-full border-5 border-white bg-[#efefef] pr-2 shadow">
        <button aria-label="Map view" className="flex h-[35px] w-[35px] items-center justify-center rounded-full bg-[#3f51b5]">
          <svg viewBox="0 0 16 20" className="h-5 w-4"><path fillRule="evenodd" d="M8 0a8 8 0 0 1 8 8c0 5-5 8-8 12C5 16 0 13 0 8a8 8 0 0 1 8-8zm0 3.800a4 4 0 1 0 0 8 4 4 0 0 0 0-8z" fill="#fff" /></svg>
        </button>
        <button aria-label="List view">
          <svg viewBox="0 0 20 16" className="h-4 w-5" stroke="#3f51b5" strokeWidth="2"><path d="M0 2h2M5 2h15M0 8h2M5 8h15M0 14h2M5 14h15" /></svg>
        </button>
      </div>
      <button aria-label="Full screen" className="absolute right-2.5 top-2.5 flex h-10 w-10 items-center justify-center rounded-sm bg-white shadow">
        <svg viewBox="0 0 18 18" className="h-[18px] w-[18px]" fill="none" stroke="#666" strokeWidth="2.600"><path d="M1.300 6V1.300H6M12 1.300h4.700V6M16.700 12v4.700H12M6 16.700H1.300V12" /></svg>
      </button>
      <div className="absolute right-3.5 top-[60px] flex w-[30px] flex-col items-center divide-y divide-[#ddd] rounded-sm bg-white px-1 shadow">
        <button aria-label="More" className="flex h-[18px] w-full items-center justify-center gap-0.5">
          <span className="h-1 w-1 rounded-full bg-[#aaa]" /><span className="h-1 w-1 rounded-full bg-[#aaa]" /><span className="h-1 w-1 rounded-full bg-[#aaa]" />
        </button>
        <button aria-label="Entire homes" className="flex h-[31px] w-full items-center justify-center">
          <svg viewBox="0 0 22 22" className="h-[22px] w-[22px] shrink-0" fill="none" stroke="#fff" strokeWidth="1"><circle cx="11" cy="11" r="11" fill="#9320ad" stroke="none" /><path d="M3.500 11.500L11 4.500l7.500 7M5.500 10v7.500h11V10M5 5.500v4M8.500 17.500v-5h5v5" /><circle cx="11" cy="10" r="1.600" fill="#fff" /><path d="M9 14.500h4" /></svg>
        </button>
        <button aria-label="Private rooms" className="flex h-[31px] w-full items-center justify-center">
          <svg viewBox="0 0 22 22" className="h-[22px] w-[22px] shrink-0" fill="none" stroke="#fff" strokeWidth="1"><circle cx="11" cy="11" r="11" fill="#03a0ff" stroke="none" /><path d="M7 9V4h8v14H7v-4M13.500 10v2.500" /><path d="M5 9.500h4.500v4H5z" fill="#bfe6ff" /></svg>
        </button>
        <button aria-label="Shared rooms" className="flex h-[31px] w-full items-center justify-center">
          <svg viewBox="0 0 22 22" className="h-[22px] w-[22px] shrink-0" fill="none" stroke="#fff" strokeWidth="1"><circle cx="11" cy="11" r="11" fill="#04c4a8" stroke="none" /><path d="M4 10V6h7v3M3 9.500h2v3h6v-3h1.500v5H3zM4.500 14.500v2M11 14.500v2M12 10q0-5 3-5t3 5zM15 10v7M13.500 17h3" /></svg>
        </button>
      </div>
      <div className="absolute right-2.5 top-[354px] flex w-10 flex-col items-center divide-y divide-[#ddd] rounded-sm bg-white px-1 shadow">
        <button aria-label="Zoom in" className="flex h-10 w-full items-center justify-center"><svg viewBox="0 0 18 18" className="h-[18px] w-[18px]"><path d="M9 0v18M0 9h18" stroke="#666" strokeWidth="3.600" /></svg></button>
        <button aria-label="Zoom out" className="flex h-10 w-full items-center justify-center"><svg viewBox="0 0 18 18" className="h-[18px] w-[18px]"><path d="M0 9h18" stroke="#666" strokeWidth="3.600" /></svg></button>
      </div>
      <span className="absolute bottom-1 left-1.5 font-[Roboto,sans-serif] text-lg font-bold leading-5 text-white [text-shadow:0_0_3px_#888,0_0_1px_#888]">Google</span>
      <div className="absolute bottom-0 right-0 flex gap-3 bg-[#f5f5f5]/70 px-1.5 font-[Roboto,sans-serif] text-[10px] leading-[14px] text-[#222]">
        <span>Map data ©2020</span>
        <a href="#terms">Terms of Use</a>
      </div>
    </section>
  );
}

/* ---------- bar charts ---------- */

function HBars({ top, height, x0, x1, y0, y1, ticks, rows, end }) {
  return (
    <svg viewBox={`20 ${top} 881 ${height}`} className="block w-full" fontSize="12" fill="#666">
      <path d={`M${x0 - 6} ${y0 + 0.5}H${x0}M${x0 - 6} ${y1 + 0.5}H${end}M${end} ${y1}v5`} stroke="#f0f0f0" />
      {ticks.map(([x, t]) => (
        <g key={t}>
          <path d={`M${x} ${y0}V${y1}`} stroke="#f2f2f2" />
          <text x={x} y={y1 + 15} textAnchor="middle" fontWeight="300">{t}</text>
        </g>
      ))}
      {rows.map(([label, y, w, color]) => (
        <g key={label}>
          <text x={x0 - 9} y={y + 4} textAnchor="end" fontWeight="300">{label}</text>
          <rect x={x0} y={y - 4} width={x1 - x0} height="7" rx="3.500" fill="#ededed" />
          <rect x={x0} y={y - 4} width={w} height="7" rx="3.500" fill={color} />
        </g>
      ))}
    </svg>
  );
}

const typeTicks = [[125, "0"], [258, "200"], [391, "400"], [524, "600"], [657, "800"], [790, "1K"]];
const typeRows = [["Entire Home", 1517, 598, "#9926b0"], ["Private Room", 1560, 138, "#55b8fb"], ["Shared Room", 1604, 7, "#04c4a8"]];

const amenities = [
  ["Air Conditioning", 2481, 688], ["Heating", 2508, 681], ["Washer", 2535, 618], ["Dryer", 2562, 676], ["Kitchen", 2589, 675],
  ["Parking", 2616, 507], ["Internet", 2643, 705], ["Cable TV", 2675, 195], ["Pool", 2702, 274], ["Hot Tub", 2729, 33],
].map((r) => [...r, "#3f51b5"]);
const amenityTicks = [[140, "0%"], [285, "20%"], [430, "40%"], [575, "60%"], [719, "80%"], [864, "100%"]];

const sizes = [[142, 2017, "Studio"], [274, 1915, "1"], [406, 1971, "2"], [539, 1991, "3"], [671, 2028, "4"], [803, 2036, "5+", "Rooms"]];

function SizeChart() {
  return (
    <svg viewBox="20 1893 881 217" className="block w-full" fontSize="12" fill="#777">
      {[400, 300, 200, 100, 0].map((v, i) => (
        <g key={v}>
          <path d={`M71 ${1915.5 + i * 31.2}H869`} stroke="#f1f1f1" />
          <text x="69" y={1920 + i * 31} textAnchor="end" fontWeight="300" fill="#555">{v}</text>
        </g>
      ))}
      <path d="M75.500 1915V2045M869.500 2040v5" stroke="#f1f1f1" />
      {sizes.map(([x, y, a, b]) => (
        <g key={a} textAnchor="middle">
          <rect x={x - 5} y="1915" width="10" height="125" rx="5" fill="#ededed" />
          <rect x={x - 5} y={y} width="10" height={2040 - y} rx={Math.min(5, (2040 - y) / 2)} fill="#3f51b5" />
          <text x={x} y="2058">{a}</text>
          {b && <text x={x} y="2071">{b}</text>}
        </g>
      ))}
    </svg>
  );
}

const growth = [2278, 2275, 2273, 2269, 2260, 2253, 2247, 2241, 2236, 2224, 2215, 2219, 2227].map((y, i) => [101 + i * 61.45, y]);
const quarters = ["Q3 '17", "Q4 '17", "Q1 '18", "Q2 '18", "Q3 '18", "Q4 '18", "Q1 '19", "Q2 '19", "Q3 '19", "Q4 '19", "Q1 '20", "Q2 '20", "Q3 '20"];

function GrowthChart() {
  return (
    <svg viewBox="20 2186 881 199" className="block w-full" fontSize="12" fill="#555">
      <path d={smooth(growth) + "V2320H101Z"} fill="#f1fbf8" />
      {["0", "200", "400", "600", "800", "1K", "1.2K", "1.4K"].map((t, i) => (
        <g key={t}>
          <path d={`M67 ${2320.5 - i * 13.7}H869`} stroke="#000" strokeOpacity=".05" />
          <text x="64" y={2324 - Math.round(i * 13.6)} textAnchor="end" fontWeight="300">{t}</text>
        </g>
      ))}
      <path d="M64 2215.500h7V2325M869.500 2320v5" fill="none" stroke="#efefef" />
      <path d={smooth(growth)} fill="none" stroke="#00bcd4" strokeWidth="2" />
      {growth.map(([x, y], i) => (
        <g key={i} textAnchor="middle">
          <circle cx={x} cy={y} r="4" fill="#00bcd4" stroke="#22d3a5" strokeWidth="1.500" />
          <text x={x} y="2338" fontWeight="300">{quarters[i].slice(0, 2)}</text>
          <text x={x} y="2351" fontWeight="300">{quarters[i].slice(3)}</text>
        </g>
      ))}
    </svg>
  );
}

/* ---------- ratings ---------- */

const radar = [
  [384, 2902, "#6e5be8"], [429, 2933, "#ffb74d"], [436, 2989, "#2196f3"], [384, 3017, "#0f9b8e"], [338, 2986, "#0c6aa0"], [335, 2931, "#ff9800"],
];
const radarLabels = [[382, 2881, "Accuracy"], [464, 2923, "Value"], [464, 3008, "Location"], [382, 3051, "Communication"], [299, 3008, "Cleanliness"], [299, 2923, "Check In"]];
const edges = ["#ffb74d", "#2196f3", "#0f9b8e", "#0c6aa0", "#ff9800", "#6e5be8"];

function Ratings() {
  return (
    <div className="flex justify-center gap-5 pb-5">
      <svg viewBox="268 2847 231 217" className="h-[217px] w-[231px] shrink-0" fontSize="11" fill="#666">
        <circle cx="384" cy="2959" r="70" fill="none" stroke="#f3f3f3" strokeWidth="1.500" />
        {radar.map(([x, y], i) => {
          const n = radar[(i + 1) % 6];
          return <line key={i} x1={x} y1={y} x2={n[0]} y2={n[1]} stroke={edges[i]} strokeWidth="1.200" />;
        })}
        {radar.map(([x, y, c]) => <circle key={c} cx={x} cy={y} r="4" fill={c} />)}
        {radarLabels.map(([x, y, t]) => <text key={t} x={x} y={y} textAnchor="middle">{t}</text>)}
      </svg>
      <dl className="pt-[49px] text-[11px] leading-5 text-[#777]">
        <dt>Overall Rating:</dt>
        <dd className="text-base font-bold leading-4 text-[#555]">4.62</dd>
        <dt className="mt-6">Rated at Least 4.5 Overall:</dt>
        <dd className="text-base font-bold leading-4 text-[#555]">84%</dd>
      </dl>
    </div>
  );
}

/* ---------- activity ---------- */

function Donut({ title, parts }) {
  let at = 0;
  const pt = (r, f) => {
    const a = f * Math.PI * 2 - Math.PI / 2;
    return [80 + r * Math.cos(a), 80 + r * Math.sin(a)];
  };
  return (
    <svg viewBox="0 0 160 160" className="h-40 w-40">
      {parts.map(([v, c]) => {
        const a = at / 100;
        at += v;
        const b = at / 100;
        const big = v > 50 ? 1 : 0;
        const [m, n] = pt(70, (a + b) / 2);
        return (
          <g key={c}>
            <path d={`M${pt(80, a)}A80 80 0 ${big} 1 ${pt(80, b)}L${pt(60, b)}A60 60 0 ${big} 0 ${pt(60, a)}Z`} fill={c} stroke="#fff" strokeWidth="1" />
            {v > 2 && <text x={Math.round(m)} y={Math.round(n) + 3} textAnchor="middle" fontSize="9" fontWeight="600" fill="#fff">{v}%</text>}
          </g>
        );
      })}
      <text x="80" y="89" textAnchor="middle" fontSize="18" fill="#666">{title}</text>
    </svg>
  );
}

/* ---------- settings ---------- */

function Stack({ label, parts }) {
  return (
    <div>
      <h3 className="text-xs leading-4 text-[#777]">{label}</h3>
      <div className="flex h-5 gap-px pr-0.5">
        {parts.map(([t, w, c]) => (
          <div key={c + w} className="flex min-w-0 items-center justify-center text-[10px] font-semibold text-white" style={{ flexGrow: w, flexBasis: 0, backgroundColor: c }}>
            {t}
          </div>
        ))}
      </div>
    </div>
  );
}

/* ---------- page ---------- */

export default function App() {
  return (
    <div className="relative bg-[#f0f3fd] pr-2 font-['Open_Sans',sans-serif]">
      {["top-0", "top-[1110px]", "top-[2220px]", "top-[3330px]"].map((t) => (
        <div key={t} className={"absolute right-0 h-[222px] w-2 rounded-full bg-[#c9c9cd] " + t} />
      ))}
      <Header />
      <main className="border-l border-[#dfe3f5] pb-5 pl-[19px] pr-5 pt-5">
        <div className="flex gap-[18px]">
          <Picker label="Market" value="Fort Worth" />
          <Picker label="Neighborhood" value="All Neighborhoods / Zip Codes" />
          <button className="ml-2.5 h-10 w-[95px] rounded bg-[#02c3a7] text-sm font-bold text-white">Purchase</button>
        </div>
        <MarketGrade />
        <div className="mt-5 grid grid-cols-3 gap-[15px]">
          {metrics.map((m) => <Metric key={m.title} m={m} />)}
        </div>
        <RentalMap />

        <Card className="mt-[26px]">
          <div className="flex h-[71px] items-center justify-between rounded-t bg-[#efefef] px-5">
            <h1 className="text-[22px] font-light text-[#3f51b5]">1,119 Active Rentals</h1>
            <Info className="text-[#8f9ad6]" />
          </div>
          <CardHead title="Rental Type">80% Entire Home rentals</CardHead>
          <HBars top={1473} height={197} x0={125} x1={869} y0={1495} y1={1625} end={869} ticks={typeTicks} rows={typeRows} />
        </Card>

        <Card className="mt-5 pb-3">
          <CardHead title="Rental Channel" />
          <div className="mt-8 flex justify-center gap-[30px] text-center">
            <div className="w-[100px]">
              <div className="flex h-[30px] items-center justify-center gap-0.5 border-b border-[#ececec] text-[#ff5a5f]">
                <FaAirbnb className="h-5 w-5" />
                <span className="font-[Lato,sans-serif] text-[15px] font-bold">airbnb</span>
              </div>
              <div className="text-base font-bold leading-7 text-[#555]">82%</div>
            </div>
            <div className="w-[100px]">
              <div className="flex h-[30px] items-center justify-center border-b border-[#ececec]">
                <span className="bg-[repeating-linear-gradient(65deg,#1d4f9c_0_2px,#8fc0ee_2px_3px,#2f6fc4_3px_5px,#dbe9f8_5px_6px)] bg-clip-text pr-1 font-['Liberation_Serif',serif] text-[30px] font-bold italic leading-7 text-transparent">Vrbo</span>
              </div>
              <div className="text-base font-bold leading-7 text-[#555]">6%</div>
            </div>
            <div className="w-[100px]">
              <div className="flex h-[30px] items-center justify-center border-b border-[#ececec] text-sm text-[#555]">Listed on Both</div>
              <div className="text-base font-bold leading-7 text-[#555]">12%</div>
            </div>
          </div>
        </Card>

        <Card className="mt-5">
          <CardHead title="Rental Size">1.7 Bedrooms / 4.9 Guests on average</CardHead>
          <SizeChart />
        </Card>

        <Card className="mt-5">
          <CardHead title="Rental Growth">
            <p>-7% Quarterly Growth</p>
            <p className="flex items-center justify-end gap-1"><Info />Jun '17 - Vrbo Data Added</p>
          </CardHead>
          <GrowthChart />
        </Card>

        <Card className="mt-5">
          <CardHead title="Amenities" />
          <HBars top={2445} height={342} x0={140} x1={864} y0={2467} y1={2742} end={864} ticks={amenityTicks} rows={amenities} />
        </Card>

        <Card className="mt-5">
          <CardHead title="Airbnb Ratings" />
          <Ratings />
        </Card>

        <Card className="mt-5 pb-5">
          <CardHead title="Rental Activity" icon={<Info />}>36% Available Full Time</CardHead>
          <div className="mt-[17px] flex justify-center gap-10">
            <Donut title="Available" parts={[[39, "#818cf8"], [24, "#6a78e5"], [22, "#5a67d3"], [15, "#3f4fb8"]]} />
            <Donut title="Booked" parts={[[62, "#82cfff"], [28, "#57c0ff"], [9, "#03aaff"], [1, "#0390ef"]]} />
          </div>
        </Card>

        <Card className="mt-5 pb-5">
          <CardHead title="Rental Settings" />
          <div className="mt-[18px] flex flex-col gap-[21px] px-5">
            <Stack label="Cancellation Policy" parts={[["flexible", 281, "#64c9ae"], ["moderate", 173, "#3f51b5"], ["strict", 381, "#ff964f"], ["", 2, "#ff9800"]]} />
            <Stack label="Minimum Stay" parts={[["1Night", 376, "#2196f3"], ["2", 306, "#6f5beb"], ["3", 49, "#0f6ba3"], ["4-6", 19, "#3f51b5"], ["7-29", 30, "#ff9800"], ["30+", 56, "#64c9ae"]]} />
          </div>
        </Card>
      </main>
    </div>
  );
}
